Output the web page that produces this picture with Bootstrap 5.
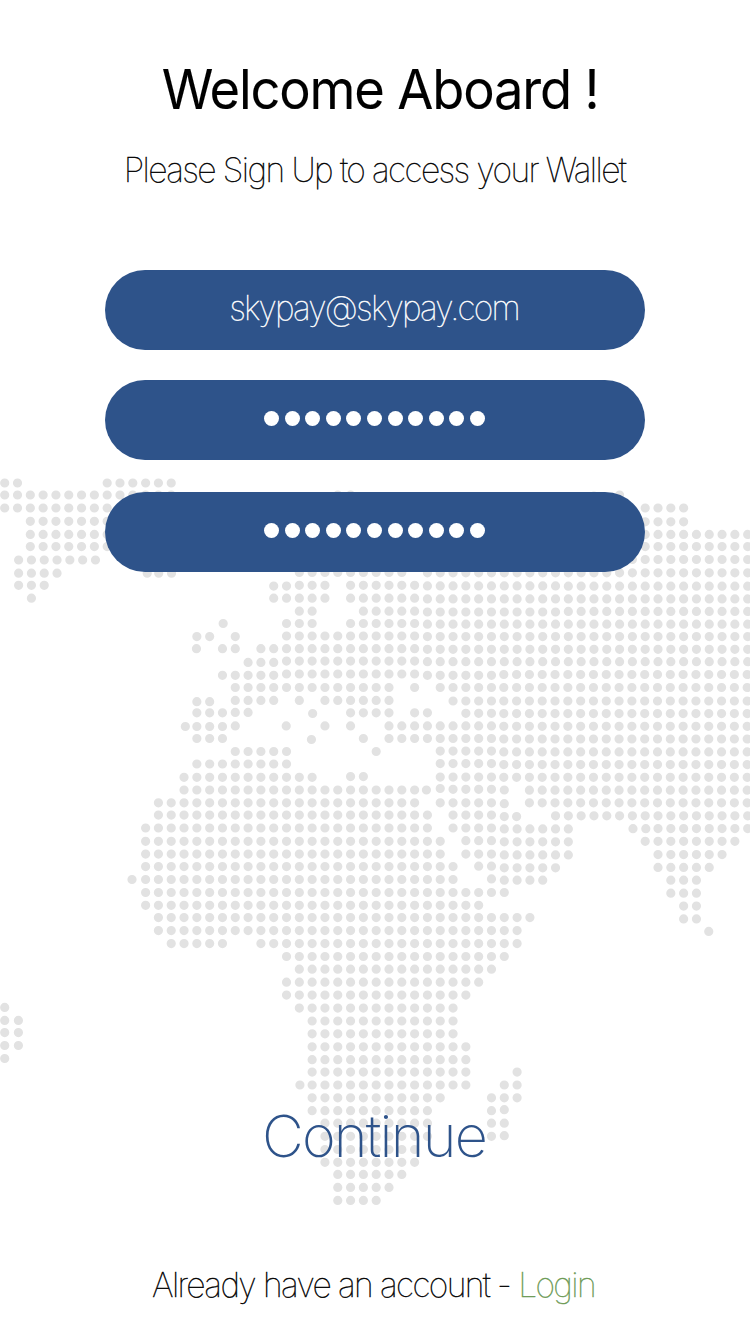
<!DOCTYPE html>
<html lang="en">
<head>
<meta charset="utf-8">
<meta name="viewport" content="width=device-width, initial-scale=1">
<title>SkyPay – Sign Up</title>
<link rel="stylesheet" href="https://cdn.jsdelivr.net/npm/bootstrap@5.3.0/dist/css/bootstrap.min.css">
<style>
body{font-family:Inter,"Liberation Sans",sans-serif;color:#000;background:#fff;overflow:hidden}
.screen{height:1334px}
.dotmap{top:0;left:0;fill:#e2e2e2}
.title{font-size:54.5px;font-weight:400;line-height:66px;margin-top:56px;letter-spacing:-1.2px;padding-left:10px;-webkit-text-stroke:.1px #000}
.title span{display:inline-block;transform:scaleX(.962)}
.sub,.mail,.foot{font-weight:100;-webkit-text-stroke-width:.42px}
.sub{font-size:33.7px;line-height:40px;margin-top:28px;letter-spacing:-1.6px;padding-right:1px}
.fields{width:540px;margin-top:80px}
.pill{height:80px;background:#2e538a;color:#fff}
.pill-gap-sm{margin-top:30px}
.pill-gap-lg{margin-top:32px}
.mail{font-size:33.7px;letter-spacing:-1.82px;padding:0 2px 3px 0}
.go{font-size:57.5px;font-weight:200;line-height:70px;color:#2e538a;letter-spacing:-1.75px;margin-top:529px;padding-right:2px}
.foot{font-size:33.7px;line-height:40px;letter-spacing:-1.62px;margin-top:94px;padding-right:3px}
.foot a{color:#6c9a55}
.bullets{gap:5.6px;margin:-4px 1px 0 0}
.bullets i{width:15px;height:15px;border-radius:50%;background:#fff}
</style>
</head>
<body>
<main class="screen position-relative d-flex flex-column align-items-center text-nowrap">
  <svg class="dotmap position-absolute" width="750" height="1334" aria-hidden="true"><path id="dots"/></svg>
  <h1 class="title mb-0 position-relative"><span>Welcome Aboard !</span></h1>
  <p class="sub mb-0 position-relative">Please Sign Up to access your Wallet</p>
  <form class="fields position-relative">
    <div class="pill mail rounded-pill d-flex align-items-center justify-content-center">skypay@skypay.com</div>
    <div class="pill pill-gap-sm rounded-pill d-flex align-items-center justify-content-center"><div class="bullets d-flex"><i></i><i></i><i></i><i></i><i></i><i></i><i></i><i></i><i></i><i></i><i></i></div></div>
    <div class="pill pill-gap-lg rounded-pill d-flex align-items-center justify-content-center"><div class="bullets d-flex"><i></i><i></i><i></i><i></i><i></i><i></i><i></i><i></i><i></i><i></i><i></i></div></div>
  </form>
  <a class="go position-relative text-decoration-none" href="#">Continue</a>
  <p class="foot mb-0 position-relative">Already have an account - <a class="text-decoration-none" href="#">Login</a></p>
</main>
<script src="https://cdn.jsdelivr.net/npm/bootstrap@5.3.0/dist/js/bootstrap.bundle.min.js"></script>
<script>
// World map rows: vertical centre, then runs "first-last" of grid columns.
// "@dx,dy" after a run nudges it off the grid.
const rows = `483 0-1 8-13
495 0-13 26-27 46@0,1 48
508 0-8 50-53
521.3 2-8 50-53@0,.5
534.4 2-8 50-58
546.6 2-8 50-58
560 1-7@1.1,0 49-58@0,-.5
572.8 1-4@1.1,.4 11@1.6,.4 12-13@.3,.4 23-31@0,-.3 33-58
585.3 1-3@1.1,0 21-22@0,.8 23-25 27-32 33-43@0,.6 44-58@0,.9
598.2 2@1.1,0 21-25 27-32 33-58@0,.7
611.2 23-24 28-32 33-43@0,.8 44-58@0,.2
623.5 17@.7,0 22-24 27-32 33-58@0,.7
636 15-16@0,.6 18@0,.6 22-32 33-58@0,.6
648.7 15@-.4,0 17-18 20-21 22-32 33-58@0,.6
661.1 19-21@0,1.3 22-32 33-58@0,.6
674 17-21@0,1.3 22-32 33-38@0,1.3 39-58@-.5,.5
687.5 18-21 22-30 32 34-38 39-58@-.5,0
700.4 15-16@0,1.3 18-21 23 25-30 35-38@0,.6 39-58@-.5,.6
712.8 15-17 18-19@0,-.4 24@.5,.7 27-30 32-33 36-38@0,.5 39-58@-.5,.8
725.9 14@1.3,.6 15-17@0,.6 18 22@-.3,0 25 27 30-38 39-58@-.5,.4
738.5 15-17 24@-.7,1 28 30-38 39-58@-.5,.5
751.5 18-22 29 34-38@0,-.4 39-58@-.5,.4
764 15-22 34-38@0,-.4 39-58@-.5,.6
777.3 14-24 27-28@0,-.7 34-38@0,-.2 39-58@-.5,0
790 14-32 33@-1,0 34@0,-1.5 35-38@0,-.7 39 41-58@-.5,.2
802.8 12-32 34-38 39@0,.9 41-58@-.5,0
815.1 12-33 35-38 39@0,1.5 40@-.5,1.5 43-58@0,.7
828 11-33 35-38 39-44@0,.9 49-50@.6,.7 51-58@0,.6
841.3 11-34 36-38@0,-.6 39-44@0,.5 50-57
854.1 11-34 36-38 39-44@0,.8 51-56@0,.5
866.6 11-35 37-38@0,-.4 39-43@0,1.2 51-55@0,.8
879.5 10@-.8,0 11-35 38@0,-.6 39-42@0,.7 52-54@0,.7
892.5 11-39 52-54@0,.7
905.3 11-37 53-54@0,.8
917.6 12-41 53-54@0,1.3
930.6 12-40 55@-.5,.8
943.6 13-17 20-40
956.5 22-39
969.2 23-38
982.2 22-37
995.1 22-36
1008.1 0@0,-.7 23-35
1021 0@0,-.6 1@.9,-.6 24-35
1033.8 0@0,-1.2 1@.9,-1.2 24-35
1046.8 0@0,-1.3 1@.9,-1.3 24-36
1059.7 0@0,-1.2 24-36
1072.1 24-36 40
1085 23@.6,0 24-36 39-40
1097.8 24-34 38-40
1110.7 24-33 38 39@0,-1
1123.2 25-33 38-39
1136.3 25-33 38 39@0,-.6
1149.5 25-32
1162.3 25-32
1174.4 26-31
1187.4 26-30
1200.4 26-29`;
const r = 4.6;
let d = '';
for (const line of rows.split('\n')) {
  const [y, ...runs] = line.split(' ');
  for (const run of runs) {
    const [span, off] = run.split('@');
    const [dx, dy] = (off || '0,0').split(',').map(Number);
    const [a, b = a] = span.split('-');
    for (let i = +a; i <= +b; i++)
      d += `M${(4.7 + 12.81 * i + dx - r).toFixed(2)} ${(+y + dy).toFixed(2)}a${r} ${r} 0 1 0 ${2 * r} 0a${r} ${r} 0 1 0 ${-2 * r} 0`;
  }
}
document.getElementById('dots').setAttribute('d', d);
</script>
</body>
</html>
